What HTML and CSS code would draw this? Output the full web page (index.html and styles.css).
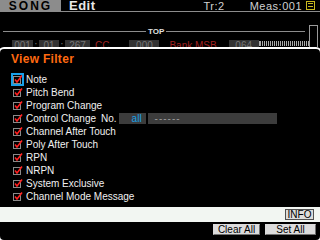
FILE: index.html
```html
<!DOCTYPE html>
<html lang="en">
<head>
    <meta charset="UTF-8">
    <title>Song Edit - View Filter</title>
    <link rel="stylesheet" href="styles.css">
</head>
<body>
    <!-- Header -->
    <div class="header">
        <div class="tab">SONG</div>
        <div class="mode">Edit</div>
        <div class="track">Tr:2</div>
        <div class="meas">Meas:001</div>
        <div class="menu-icon"><span></span></div>
    </div>

    <!-- Track area behind the dialog -->
    <div class="track-area">
        <div class="top-row">
            <div class="rule rule-left"></div>
            <div class="top-label">TOP</div>
            <div class="rule rule-right"></div>
            <div class="scroll"></div>
        </div>
        <div class="event-row">
            <div class="cell w-a">001</div><span class="colon">:</span>
            <div class="cell w-b">01</div><span class="colon">:</span>
            <div class="cell w-c">267</div>
            <div class="red cc">CC</div>
            <div class="cell w-d">000</div>
            <div class="red bank">Bank MSB</div>
            <div class="cell w-d">064</div>
            <div class="meter"></div>
        </div>
    </div>

    <!-- Dialog -->
    <div class="dialog">
        <div class="dialog-title">View Filter</div>

        <ul class="filter-list">
            <li class="item focused"><span class="check"><svg width="11" height="11" viewBox="0 0 11 11"><rect x="1.5" y="2.5" width="7" height="7" fill="none" stroke="#8a8a8a"/><path d="M3 5.5 L5 8 L10 1.5" fill="none" stroke="#ff2020" stroke-width="1.6"/></svg></span>Note</li>
            <li class="item"><span class="check"><svg width="11" height="11" viewBox="0 0 11 11"><rect x="1.5" y="2.5" width="7" height="7" fill="none" stroke="#8a8a8a"/><path d="M3 5.5 L5 8 L10 1.5" fill="none" stroke="#ff2020" stroke-width="1.6"/></svg></span>Pitch Bend</li>
            <li class="item"><span class="check"><svg width="11" height="11" viewBox="0 0 11 11"><rect x="1.5" y="2.5" width="7" height="7" fill="none" stroke="#8a8a8a"/><path d="M3 5.5 L5 8 L10 1.5" fill="none" stroke="#ff2020" stroke-width="1.6"/></svg></span>Program Change</li>
            <li class="item"><span class="check"><svg width="11" height="11" viewBox="0 0 11 11"><rect x="1.5" y="2.5" width="7" height="7" fill="none" stroke="#8a8a8a"/><path d="M3 5.5 L5 8 L10 1.5" fill="none" stroke="#ff2020" stroke-width="1.6"/></svg></span>Control Change
                <span class="no">No.</span>
                <span class="field-all">all</span>
                <span class="field-name">------</span>
            </li>
            <li class="item"><span class="check"><svg width="11" height="11" viewBox="0 0 11 11"><rect x="1.5" y="2.5" width="7" height="7" fill="none" stroke="#8a8a8a"/><path d="M3 5.5 L5 8 L10 1.5" fill="none" stroke="#ff2020" stroke-width="1.6"/></svg></span>Channel After Touch</li>
            <li class="item"><span class="check"><svg width="11" height="11" viewBox="0 0 11 11"><rect x="1.5" y="2.5" width="7" height="7" fill="none" stroke="#8a8a8a"/><path d="M3 5.5 L5 8 L10 1.5" fill="none" stroke="#ff2020" stroke-width="1.6"/></svg></span>Poly After Touch</li>
            <li class="item"><span class="check"><svg width="11" height="11" viewBox="0 0 11 11"><rect x="1.5" y="2.5" width="7" height="7" fill="none" stroke="#8a8a8a"/><path d="M3 5.5 L5 8 L10 1.5" fill="none" stroke="#ff2020" stroke-width="1.6"/></svg></span>RPN</li>
            <li class="item"><span class="check"><svg width="11" height="11" viewBox="0 0 11 11"><rect x="1.5" y="2.5" width="7" height="7" fill="none" stroke="#8a8a8a"/><path d="M3 5.5 L5 8 L10 1.5" fill="none" stroke="#ff2020" stroke-width="1.6"/></svg></span>NRPN</li>
            <li class="item"><span class="check"><svg width="11" height="11" viewBox="0 0 11 11"><rect x="1.5" y="2.5" width="7" height="7" fill="none" stroke="#8a8a8a"/><path d="M3 5.5 L5 8 L10 1.5" fill="none" stroke="#ff2020" stroke-width="1.6"/></svg></span>System Exclusive</li>
            <li class="item"><span class="check"><svg width="11" height="11" viewBox="0 0 11 11"><rect x="1.5" y="2.5" width="7" height="7" fill="none" stroke="#8a8a8a"/><path d="M3 5.5 L5 8 L10 1.5" fill="none" stroke="#ff2020" stroke-width="1.6"/></svg></span>Channel Mode Message</li>
        </ul>

        <div class="info-bar">
            <button class="btn btn-info">INFO</button>
        </div>

        <div class="dialog-footer">
            <button class="btn btn-clear">Clear All</button>
            <button class="btn btn-set">Set All</button>
        </div>
    </div>
</body>
</html>
```

FILE: styles.css
```css
body {
    margin: 0;
    padding: 0;
    width: 320px;
    height: 240px;
    overflow: hidden;
    background: #000;
    color: #fff;
    font-family: 'Liberation Sans', Arial, sans-serif;
    font-size: 10px;
}

/* Header */
.header {
    display: flex;
    align-items: center;
    height: 11px;
    border-bottom: 1px solid #8c8c8c;
}

.tab {
    width: 61px;
    height: 11px;
    background: #8c8c8c;
    color: #000;
    font-weight: 700;
    font-size: 12px;
    line-height: 12px;
    text-align: center;
    letter-spacing: 2px;
}

.mode {
    margin-left: 8px;
    font-weight: 700;
    font-size: 13px;
    line-height: 12px;
    letter-spacing: 0.5px;
    color: #e8e8e8;
    flex: 1;
}

.track,
.meas {
    font-size: 11px;
    line-height: 12px;
    letter-spacing: 0.5px;
    color: #d0d0d0;
}

.meas {
    margin-left: 25px;
}

.menu-icon {
    width: 7px;
    height: 7px;
    margin: 0 5px 0 4px;
    border: 1px solid #c8b820;
}

.menu-icon span {
    display: block;
    margin: 1px 1px;
    height: 1px;
    border-top: 1px solid #c8b820;
    border-bottom: 1px solid #c8b820;
    padding-top: 1px;
}

/* Track area */
.track-area {
    height: 35px;
    overflow: hidden;
}

.top-row {
    display: flex;
    align-items: flex-start;
    height: 15px;
    margin-top: 13px;
    padding-left: 3px;
}

.rule {
    height: 1px;
    margin-top: 6px;
    background: #8c8c8c;
}

.rule-left {
    width: 143px;
}

.top-label {
    font-size: 8px;
    line-height: 8px;
    font-weight: 700;
    color: #e0e0e0;
    margin: 3px 2px 0;
}

.rule-right {
    width: 139px;
}

.scroll {
    width: 9px;
    height: 24px;
    margin-left: 4px;
    border: 1px solid #9a9a9a;
    border-bottom: none;
    box-sizing: border-box;
}

.event-row {
    display: flex;
    align-items: flex-start;
    height: 7px;
    overflow: hidden;
    padding-left: 12px;
    font-size: 10px;
    line-height: 12px;
    color: #777;
}

.cell {
    height: 10px;
    background: #333;
    text-align: center;
}

.w-a { width: 21px; }
.w-b { width: 20px; }
.w-c { width: 25px; }
.w-d { width: 30px; }

.colon {
    width: 6px;
    text-align: center;
}

.red {
    color: #a02020;
}

.cc {
    margin: 0 20px 0 5px;
}

.bank {
    margin: 0 12px 0 10px;
}

.meter {
    width: 48px;
    height: 5px;
    margin-top: 1px;
    border-left: 1px solid #aaa;
    border-right: 1px solid #aaa;
    background: repeating-linear-gradient(90deg, #aaa 0 1px, transparent 1px 2px);
}

/* Dialog */
.dialog {
    height: 195px;
    margin: 0 -2px;
    border: 2px solid #fff;
    border-radius: 6px;
    box-sizing: border-box;
    background: #000;
    display: flex;
    flex-direction: column;
}

.dialog-title {
    height: 24px;
    padding: 4px 0 0 11px;
    box-sizing: border-box;
    font-size: 12px;
    line-height: 12px;
    font-weight: 700;
    letter-spacing: 0.3px;
    color: #ff6a10;
}

.filter-list {
    list-style: none;
    margin: 0;
    padding: 0 0 0 12px;
    height: 134px;
}

.item {
    display: flex;
    align-items: center;
    height: 13px;
    line-height: 13px;
    color: #f0f0f0;
}

.check {
    width: 11px;
    height: 11px;
    margin-right: 3px;
    box-sizing: border-box;
    display: flex;
}

.focused .check {
    outline: 2px solid #18a0e8;
    outline-offset: -1px;
}

.no {
    margin-left: 5px;
}

.field-all {
    width: 27px;
    height: 11px;
    margin-left: 2px;
    background: #3c3c3c;
    color: #18a0e8;
    line-height: 11px;
    text-align: right;
    padding-right: 4px;
    box-sizing: border-box;
}

.field-name {
    width: 129px;
    height: 11px;
    margin-left: 2px;
    background: #3c3c3c;
    color: #9a9a9a;
    line-height: 11px;
    padding-left: 7px;
    box-sizing: border-box;
    letter-spacing: 1px;
}

.info-bar {
    height: 15px;
    background: #f2f6f2;
    display: flex;
    justify-content: flex-end;
    align-items: center;
    padding-right: 6px;
}

.dialog-footer {
    display: flex;
    justify-content: flex-end;
    gap: 5px;
    padding: 2px 4px 0 0;
}

.btn {
    font-family: 'Liberation Sans', Arial, sans-serif;
    font-size: 10px;
    line-height: 9px;
    color: #000;
    background: #dcdcdc;
    border: 1px solid #505050;
    padding: 0;
    margin: 0;
    height: 11px;
}

.btn-info {
    width: 29px;
}

.btn-clear,
.btn-set {
    border-color: #dcdcdc #707070 #707070 #dcdcdc;
}

.btn-clear {
    width: 47px;
}

.btn-set {
    width: 51px;
}
```
